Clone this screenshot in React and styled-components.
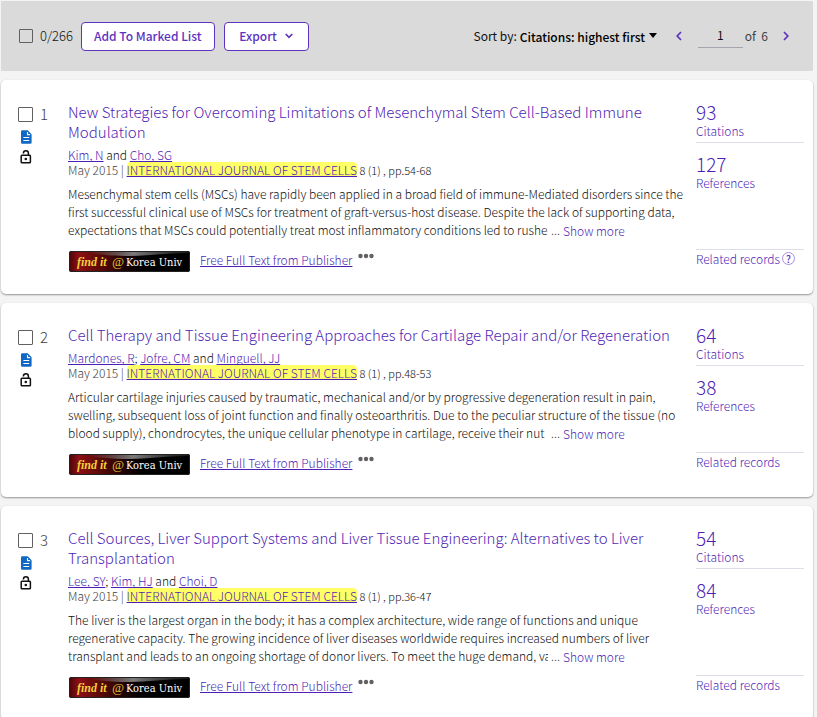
import styled, { createGlobalStyle } from "styled-components";

const GlobalStyle = createGlobalStyle`
  * {
    box-sizing: border-box;
  }

  body {
    margin: 0;
    background: #f4f4f4;
    color: #111111;
    font-family: "Noto Sans CJK JP", "Noto Sans", sans-serif;
    font-size: 12px;
    line-height: 18px;
  }

  button, input, select {
    font-family: inherit;
    font-size: inherit;
    font-weight: inherit;
    color: inherit;
    margin: 0;
    padding: 0;
  }

  a {
    color: #4f1fb5;
    text-decoration-skip-ink: none;
  }
`

const Page = styled.main`
  padding: 1px 4px 0 1px;
`

const Toolbar = styled.div`
  display: flex;
  align-items: center;
  justify-content: space-between;
  height: 70px;
  padding: 0 19px 0 18px;
  background: #dadada;
`

const ToolbarGroup = styled.div`
  display: flex;
  align-items: center;
`

const Checkbox = styled.input`
  appearance: none;
  flex: none;
  width: ${(props) => (props.$filled ? "15px" : "14px")};
  height: ${(props) => (props.$filled ? "15px" : "14px")};
  border: 1px solid #616161;
  border-radius: 1px;
  background: ${(props) => (props.$filled ? "#ffffff" : "transparent")};
`

const SelectAll = styled.label`
  display: flex;
  align-items: center;
  gap: 7px;
  margin-right: 8px;
  font-size: 13px;
  font-weight: 300;
`

const OutlineButton = styled.button`
  display: flex;
  align-items: center;
  justify-content: center;
  gap: 8px;
  min-width: 85px;
  height: 29px;
  margin-right: 9px;
  padding: 0 12px 2px;
  border: 1px solid #5e33bf;
  border-radius: 4px;
  background: #ffffff;
  color: #5e33bf;
  font-weight: 500;

  svg {
    margin-top: 2px;
  }
`

const SortLabel = styled.label`
  display: flex;
  align-items: center;
  gap: 3px;
  margin-right: 14px;
`

const SortSelect = styled.select`
  appearance: none;
  border: none;
  background: transparent;
  color: #000000;
  font-weight: 500;
`

const ArrowButton = styled.button`
  display: flex;
  align-items: center;
  justify-content: center;
  width: 16px;
  height: 20px;
  border: none;
  background: transparent;
  color: #5e33bf;
`

const PageInput = styled.input`
  width: 45px;
  height: 24px;
  margin-left: 11px;
  padding-bottom: 3px;
  border: none;
  border-bottom: 1px solid #a5a5b0;
  background: transparent;
  text-align: center;
`

const PageTotal = styled.span`
  margin: 0 10px 0 2px;
  color: #424242;
  white-space: pre;
`

const Card = styled.article`
  display: flex;
  margin-top: 9px;
  padding: 22px 9px 22px 17px;
  border-radius: 5px;
  background: #ffffff;
  box-shadow: 0 1px 2px rgba(0, 0, 0, 0.4);
`

const Side = styled.div`
  flex: none;
  width: 50px;
  padding-top: 3px;
`

const Number = styled.label`
  display: flex;
  align-items: center;
  gap: 7px;
  height: 18px;
  color: #424242;
  font-size: 15px;
  font-weight: 300;
`

const SideIcons = styled.div`
  display: flex;
  flex-direction: column;
  gap: 6px;
  padding: 7px 0 0 2px;

  svg {
    display: block;
  }
`

const Main = styled.div`
  flex: 1;
  min-width: 0;
  font-weight: 300;
`

const Title = styled.h3`
  margin: 0 0 5px;
  font-size: 15px;
  font-weight: 300;
  line-height: 20px;

  a {
    text-decoration: none;
  }
`

const Line = styled.div`
  line-height: 15px;
`

const DateText = styled.span`
  color: #424242;
`

const Journal = styled.a`
  display: inline-block;
  border-radius: 4px;
  background: #ffff66;
`

const Small = styled.span`
  font-size: 11px;
`

const Abstract = styled.p`
  margin: 7px 0 12px;
  white-space: nowrap;
`

const AbstractLine = styled.span`
  display: flex;
  gap: 3px;
`

const Clipped = styled.span`
  flex: 0 1 480px;
  overflow: hidden;
`

const ShowMore = styled.button`
  border: none;
  background: transparent;
  color: #4f1fb5;
`

const Links = styled.div`
  display: flex;
  align-items: flex-start;
  height: 21px;
`

const Finder = styled.a`
  display: block;
  height: 21px;
  margin: 0 10px 0 1px;
`

const MoreButton = styled.button`
  display: flex;
  margin-left: 6px;
  padding-top: 2px;
  border: none;
  background: transparent;
`

const Stats = styled.div`
  display: flex;
  flex: none;
  flex-direction: column;
  width: 108px;
  margin-left: 12px;
  font-weight: 300;
`

const Stat = styled.a`
  display: block;
  height: 41px;
  margin-bottom: 11px;
  border-bottom: 1px solid ${(props) => (props.$line ? "#dedeea" : "transparent")};
  text-decoration: none;

  strong {
    display: block;
    font-size: 19px;
    font-weight: 300;
    line-height: 20px;
  }
`

const Related = styled.div`
  display: flex;
  align-items: flex-start;
  gap: 2px;
  height: 23px;
  margin-top: auto;
  border-top: 1px solid #dedeea;

  a {
    text-decoration: none;
  }
`

const HelpButton = styled.button`
  width: 13px;
  height: 13px;
  margin-top: 2px;
  border: 1px solid #a78fe0;
  border-radius: 50%;
  background: transparent;
  color: #5e33bf;
  font-size: 10px;
  font-weight: 500;
  line-height: 10px;
`

const records = [
  {
    title: "New Strategies for Overcoming Limitations of Mesenchymal Stem Cell-Based Immune Modulation",
    authors: ["Kim, N", "Cho, SG"],
    pages: "pp.54-68",
    abstract: [
      "Mesenchymal stem cells (MSCs) have rapidly been applied in a broad field of immune-Mediated disorders since the",
      "first successful clinical use of MSCs for treatment of graft-versus-host disease. Despite the lack of supporting data,",
      "expectations that MSCs could potentially treat most inflammatory conditions led to rushe",
    ],
    citations: 93,
    references: 127,
    help: true,
  },
  {
    title: "Cell Therapy and Tissue Engineering Approaches for Cartilage Repair and/or Regeneration",
    authors: ["Mardones, R", "Jofre, CM", "Minguell, JJ"],
    pages: "pp.48-53",
    abstract: [
      "Articular cartilage injuries caused by traumatic, mechanical and/or by progressive degeneration result in pain,",
      "swelling, subsequent loss of joint function and finally osteoarthritis. Due to the peculiar structure of the tissue (no",
      "blood supply), chondrocytes, the unique cellular phenotype in cartilage, receive their nut",
    ],
    citations: 64,
    references: 38,
  },
  {
    title: "Cell Sources, Liver Support Systems and Liver Tissue Engineering: Alternatives to Liver Transplantation",
    authors: ["Lee, SY", "Kim, HJ", "Choi, D"],
    pages: "pp.36-47",
    abstract: [
      "The liver is the largest organ in the body; it has a complex architecture, wide range of functions and unique",
      "regenerative capacity. The growing incidence of liver diseases worldwide requires increased numbers of liver",
      "transplant and leads to an ongoing shortage of donor livers. To meet the huge demand, va",
    ],
    citations: 54,
    references: 84,
  },
]

const Chevron = ({ d, width, height }) => (
  <svg width={width} height={height} viewBox={`0 0 ${width} ${height}`} fill="none" stroke="currentColor" strokeWidth="1.7">
    <path d={d}/>
  </svg>
)

const DocumentIcon = () => (
  <svg width="13" height="14" viewBox="0 0 13 14">
    <path d="M2.3 0.3h5.4L11.6 4.2v8.2a1.3 1.3 0 0 1-1.3 1.3H2.3a1.3 1.3 0 0 1-1.3-1.3V1.6A1.3 1.3 0 0 1 2.3 0.3z" fill="#1168c4"/>
    <path d="M7.5 2v2.6h2.6M3.4 7.5h5.8M3.4 10.5h5.8" fill="none" stroke="#ffffff" strokeWidth="1.1"/>
  </svg>
)

const LockIcon = () => (
  <svg width="13" height="14" viewBox="0 0 13 14" fill="none" stroke="#111111" strokeWidth="1.5">
    <rect x="1.2" y="5.2" width="9.2" height="7.6" rx="0.8"/>
    <path d="M3.4 3.5V3.2a2.5 2.4 0 0 1 5 0v2"/>
    <circle cx="5.8" cy="9" r="1.3" fill="#111111" stroke="none"/>
  </svg>
)

const FinderLogo = () => (
  <svg width="121" height="21" viewBox="0 0 121 21">
    <defs>
      <linearGradient id="finder-red" x1="0" x2="1">
        <stop offset="0" stopColor="#4a0509"/>
        <stop offset="0.08" stopColor="#8c1015"/>
        <stop offset="0.25" stopColor="#5c0a08"/>
        <stop offset="0.45" stopColor="#200303"/>
        <stop offset="0.6" stopColor="#000000"/>
      </linearGradient>
      <linearGradient id="finder-shine" x1="0" x2="1">
        <stop offset="0.1" stopColor="#999999" stopOpacity="0"/>
        <stop offset="0.5" stopColor="#999999" stopOpacity="0.8"/>
        <stop offset="1" stopColor="#555555" stopOpacity="0.3"/>
      </linearGradient>
    </defs>
    <rect width="121" height="21" rx="2" fill="url(#finder-red)"/>
    <path d="M10 1h109v1C95 2 80 5 60 5S28 3 10 1z" fill="url(#finder-shine)"/>
    <rect x="0.5" y="0.5" width="120" height="20" rx="2" fill="none" stroke="#222222"/>
    <text x="8" y="15" fill="#f2cf3a" fontFamily="Liberation Serif, serif" fontStyle="italic" fontWeight="bold" fontSize="12">find it</text>
    <text x="43" y="15" fill="#e5c43a" fontFamily="Liberation Serif, serif" fontStyle="italic" fontSize="13">@</text>
    <text x="57" y="15" fill="#ffffff" fontFamily="DejaVu Serif Condensed, DejaVu Serif, serif" fontSize="11">Korea Univ</text>
  </svg>
)

const Authors = ({ names }) => (
  <Line>
    {names.map((name, i) => (
      <span key={name}>
        {i > 0 && (i === names.length - 1 ? " and " : "; ")}
        <a href="#author">{name}</a>
      </span>
    ))}
  </Line>
)

const Record = ({ record, index }) => {
  const [first, second, last] = record.abstract

  return (
    <Card>
      <Side>
        <Number>
          <Checkbox type="checkbox" $filled/>
          {index}
        </Number>
        <SideIcons>
          <DocumentIcon/>
          <LockIcon/>
        </SideIcons>
      </Side>
      <Main>
        <Title>
          <a href="#record">{record.title}</a>
        </Title>
        <Authors names={record.authors}/>
        <Line>
          <DateText>May 2015 | </DateText>
          <Journal href="#journal">INTERNATIONAL JOURNAL OF STEM CELLS</Journal>
          <Small> 8 (1) , {record.pages}</Small>
        </Line>
        <Abstract>
          <AbstractLine>{first}</AbstractLine>
          <AbstractLine>{second}</AbstractLine>
          <AbstractLine>
            <Clipped>{last}</Clipped>
            <span>...</span>
            <ShowMore type="button">Show more</ShowMore>
          </AbstractLine>
        </Abstract>
        <Links>
          <Finder href="#finder">
            <FinderLogo/>
          </Finder>
          <a href="#fulltext">Free Full Text from Publisher</a>
          <MoreButton type="button" aria-label="More">
            <svg width="16" height="6" viewBox="0 0 16 6" fill="#616161">
              <circle cx="2.5" cy="3" r="2.2"/>
              <circle cx="8" cy="3" r="2.2"/>
              <circle cx="13.5" cy="3" r="2.2"/>
            </svg>
          </MoreButton>
        </Links>
      </Main>
      <Stats>
        <Stat href="#citations" $line>
          <strong>{record.citations}</strong>
          Citations
        </Stat>
        <Stat href="#references">
          <strong>{record.references}</strong>
          References
        </Stat>
        <Related>
          <a href="#related">Related records</a>
          {record.help && <HelpButton type="button">?</HelpButton>}
        </Related>
      </Stats>
    </Card>
  )
}

const App = () => (
  <Page>
    <GlobalStyle/>
    <Toolbar>
      <ToolbarGroup>
        <SelectAll>
          <Checkbox type="checkbox"/>
          0/266
        </SelectAll>
        <OutlineButton type="button">Add To Marked List</OutlineButton>
        <OutlineButton type="button">
          Export
          <Chevron width={8} height={6} d="M0.7 1l3.3 3.3L7.3 1"/>
        </OutlineButton>
      </ToolbarGroup>
      <ToolbarGroup>
        <SortLabel>
          Sort by:
          <SortSelect>
            <option>Citations: highest first</option>
          </SortSelect>
          <svg width="8" height="8" viewBox="0 0 8 8">
            <path d="M0 1h8L4 6z" fill="#000000"/>
          </svg>
        </SortLabel>
        <ArrowButton type="button" aria-label="Previous page">
          <Chevron width={6} height={10} d="M5 1L1.2 5 5 9"/>
        </ArrowButton>
        <PageInput type="text" defaultValue="1" aria-label="Page"/>
        <PageTotal>of  6</PageTotal>
        <ArrowButton type="button" aria-label="Next page">
          <Chevron width={6} height={10} d="M1 1l3.8 4L1 9"/>
        </ArrowButton>
      </ToolbarGroup>
    </Toolbar>
    {records.map((record, i) => (
      <Record key={record.title} record={record} index={i + 1}/>
    ))}
  </Page>
)

export default App
